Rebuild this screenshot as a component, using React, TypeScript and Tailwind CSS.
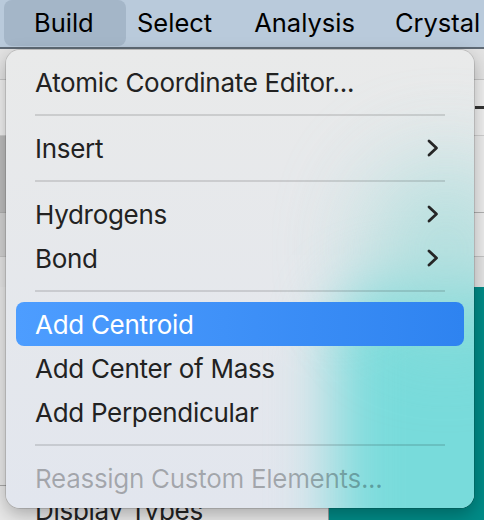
import React from 'react'

const font = { fontFamily: 'Inter, "Liberation Sans", sans-serif' }

type Row =
  | { kind: 'item'; label: string; sub?: boolean; active?: boolean; disabled?: boolean }
  | { kind: 'sep' }

const rows: Row[] = [
  { kind: 'item', label: 'Atomic Coordinate Editor...' },
  { kind: 'sep' },
  { kind: 'item', label: 'Insert', sub: true },
  { kind: 'sep' },
  { kind: 'item', label: 'Hydrogens', sub: true },
  { kind: 'item', label: 'Bond', sub: true },
  { kind: 'sep' },
  { kind: 'item', label: 'Add Centroid', active: true },
  { kind: 'item', label: 'Add Center of Mass' },
  { kind: 'item', label: 'Add Perpendicular' },
  { kind: 'sep' },
  { kind: 'item', label: 'Reassign Custom Elements...', disabled: true },
]

function Chevron() {
  return (
    <svg width="12" height="18" viewBox="0 0 12 18" fill="none">
      <path d="M2 2l7.5 7-7.5 7" stroke="#262626" strokeWidth="2.8" strokeLinecap="round" strokeLinejoin="round" />
    </svg>
  )
}

function MenuRow({ row }: { row: Row }) {
  if (row.kind === 'sep') {
    return (
      <div className="h-[22px] flex items-center px-[29px]">
        <div className="h-[2px] w-full bg-black/[0.12]" />
      </div>
    )
  }
  return (
    <div
      className={
        'h-[44px] mx-[10px] rounded-[8px] flex items-center justify-between pl-[19px] pr-[25px] text-[26px] ' +
        (row.active
          ? 'bg-gradient-to-r from-[#4d9dff] to-[#2e83f0] text-white'
          : row.disabled
            ? 'text-black/[0.28]'
            : 'text-[#222]')
      }
    >
      <span className="tracking-[-0.3px]">{row.label}</span>
      {row.sub && <Chevron />}
    </div>
  )
}

export default function App() {
  return (
    <div className="relative w-[484px] h-[520px] overflow-hidden bg-[#e6e6e6]" style={font}>
      {/* menu bar */}
      <div className="h-[49px] flex items-start bg-[#b9cadb] border-b-2 border-[#5f6a75] text-[25.5px] text-black">
        <div className="ml-[4px] h-[46px] w-[122px] rounded-[8px] bg-[#a4b6c8] flex items-center pl-[30px]">Build</div>
        <div className="h-[46px] flex items-center ml-[11px]">Select</div>
        <div className="h-[46px] flex items-center ml-[42px]">Analysis</div>
        <div className="h-[46px] flex items-center ml-[40px]">Crystal</div>
      </div>

      {/* window content behind the menu */}
      <div className="flex flex-col h-[471px]">
        <div className="h-[31px] shrink-0 bg-[#e3e3e3] border-b border-[#c6c6c6]" />
        <div className="h-[56px] shrink-0 bg-[#efefef] border-b border-[#cfcfcf] flex justify-end items-center">
          <div className="w-[9px] h-[3px] bg-[#333]" />
        </div>
        <div className="h-[77px] shrink-0 flex border-b border-[#b0b0b0]">
          <div className="w-[8px] bg-[#bcbcbc]" />
          <div className="flex-1 bg-[#ececec]" />
        </div>
        <div className="h-[44px] shrink-0 flex border-b border-[#c4c4c4]">
          <div className="w-[8px] bg-[#d2d2d2]" />
          <div className="flex-1 bg-[#ececec]" />
        </div>
        <div className="h-[30px] shrink-0 bg-[#e4e4e4]" />
        <div className="flex-1 flex">
          <div className="w-[329px] bg-[#e8e8e8] border-r border-[#9c9c9c] flex flex-col">
            <div className="h-[199px] shrink-0 border-b border-[#a8a8a8]" />
            <div className="shrink-0 pl-[35px] pt-[10px] text-[26px] leading-[30px] text-[#222] tracking-[-0.3px]">Display Types</div>
          </div>
          <div className="flex-1 bg-[#008b87]" />
        </div>
      </div>

      {/* Build menu */}
      <div className="absolute left-[6px] top-[50px] w-[468px] h-[458px] rounded-[14px] overflow-hidden shadow-[0_6px_18px_rgba(0,0,0,0.28),0_0_0_1px_rgba(0,0,0,0.12)]">
        <div className="absolute inset-0 bg-gradient-to-b from-[#e9eaea] to-[#e2e6ee]" />
        <div className="absolute left-[328px] top-[232px] w-[240px] h-[320px] rounded-[60px] bg-[#78dbdb] blur-[30px]" />
        <div className="absolute left-[360px] top-[110px] w-[160px] h-[180px] rounded-full bg-[#9fdcd9] blur-[45px] opacity-70" />
        <div className="relative pt-[10px]">
          {rows.map((r, i) => (
            <MenuRow key={i} row={r} />
          ))}
        </div>
      </div>
    </div>
  )
}
